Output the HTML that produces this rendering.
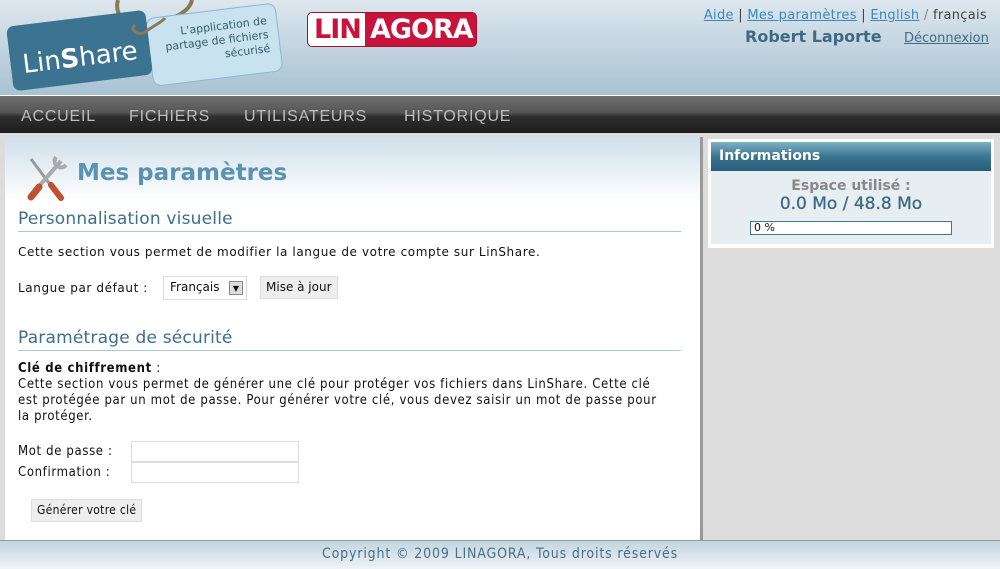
<!DOCTYPE html>
<html><head><meta charset="utf-8">
<style>
*{margin:0;padding:0;box-sizing:border-box}
body{width:1000px;height:569px;overflow:hidden;font-family:"DejaVu Sans","Liberation Sans",sans-serif;font-size:12px;color:#111;background:#dcdcdc;position:relative}
.hdr{position:absolute;left:0;top:0;width:1000px;height:96px;background:linear-gradient(#dde7ee,#a8c2d2);border-bottom:1px solid #fff}
.nav{position:absolute;left:0;top:96px;width:1000px;height:37px;background:linear-gradient(#707070,#555 45%,#2e2e2e 55%,#1e1e1e)}
.nav span{position:absolute;top:12px;color:#bdbdbd;font-family:"Liberation Sans",sans-serif;font-size:16px;letter-spacing:.8px}
.top{position:absolute;right:13px;top:8px;font-size:13px;color:#444;letter-spacing:.3px}
.top a{color:#3a8ab8;text-decoration:underline}
.main{position:absolute;left:5px;top:137px;width:695px;height:403px;background:#fff;box-shadow:3px 0 0 #999}
.tgrad{position:absolute;left:0;top:0;width:695px;height:65px;background:linear-gradient(#cfe0ea,#fff)}
h1{position:absolute;left:72px;top:23px;font-size:23px;color:#5a93b0;font-weight:bold}
h2{position:absolute;left:13px;font-size:17px;font-weight:normal;color:#3e6e8a;width:663px;border-bottom:1px solid #a8c8dc;padding-bottom:2px;letter-spacing:.2px}
.p{position:absolute;left:13px;letter-spacing:.6px}
.cond{font-family:"DejaVu Sans Condensed","DejaVu Sans",sans-serif;font-size:13px;line-height:16px;letter-spacing:.65px}
.btn{position:absolute;background:#eee;border:1px solid #ddd;font-size:12px;padding:0 5px;line-height:21px}
.inp{position:absolute;left:126px;width:168px;height:21px;border:1px solid #ddd;background:#fff}
.side{position:absolute;left:708px;top:139px;width:286px;height:109px;background:#fff}
.foot{position:absolute;left:0;top:540px;width:1000px;height:29px;background:linear-gradient(#c2d5e0,#eef3f6);border-top:1px solid #999;text-align:center;font-size:14px;letter-spacing:.85px;color:#4a6f86;line-height:26px;font-family:"DejaVu Sans Condensed","DejaVu Sans",sans-serif}
</style></head><body>
<div class="hdr">
 <svg width="300" height="96" style="position:absolute;left:0;top:0">
  <path d="M118 0 C115 10,120 20,130 25 M192 0 C190 10,175 20,160 20" stroke="#8a7a55" stroke-width="4" fill="none"/>
  <g transform="rotate(-7 220 50)"><rect x="150" y="10" width="130" height="68" rx="8" fill="#c8e2f0" stroke="#8ab8d0"/>
  <text x="270" y="30" text-anchor="end" font-size="11" fill="#3a5a6a" font-family="DejaVu Sans">L'application de</text>
  <text x="270" y="44" text-anchor="end" font-size="11" fill="#3a5a6a" font-family="DejaVu Sans">partage de fichiers</text>
  <text x="270" y="58" text-anchor="end" font-size="11" fill="#3a5a6a" font-family="DejaVu Sans">sécurisé</text></g>
  <g transform="rotate(-7 80 55)"><rect x="10" y="18" width="140" height="65" rx="7" fill="#3c7391"/>
  <text x="22" y="66" font-size="26" fill="#fff" font-family="DejaVu Sans">Lin<tspan font-weight="bold">S</tspan>hare</text></g>
  <path d="M135 25 C128 30,140 38,148 30 C155 25,162 22,165 18" stroke="#8a7a55" stroke-width="3" fill="none"/>
 </svg>
 <div style="position:absolute;left:307px;top:12px;width:170px;height:35px;border-radius:5px;background:#c8143c;border:1px solid #a01030;overflow:hidden">
  <div style="position:absolute;left:0;top:0;width:57px;height:35px;background:#fff"></div>
  <span style="position:absolute;left:6px;top:1px;font:bold 27px 'DejaVu Sans',sans-serif;color:#c8143c;letter-spacing:-1px">LIN</span>
  <span style="position:absolute;left:62px;top:1px;font:bold 27px 'DejaVu Sans',sans-serif;color:#fff;letter-spacing:-1px">AGORA</span>
 </div>
 <div class="top"><a>Aide</a> | <a>Mes paramètres</a> | <a>English</a> <span style="color:#888">/</span> français</div>
 <div style="position:absolute;left:745px;top:27px;font-size:16px;font-weight:bold;color:#3e6a82">Robert Laporte</div>
 <div style="position:absolute;left:904px;top:31px;font-size:13px;color:#3e6a82;text-decoration:underline">Déconnexion</div>
</div>
<div class="nav"><span style="left:21px">ACCUEIL</span><span style="left:129px">FICHIERS</span><span style="left:244px">UTILISATEURS</span><span style="left:404px">HISTORIQUE</span></div>
<div class="main">
 <div class="tgrad"></div>
 <svg width="44" height="46" style="position:absolute;left:20px;top:18px">
  <path d="M6 4 L30 36" stroke="#999" stroke-width="3"/>
  <path d="M26 30 L36 43" stroke="#c05030" stroke-width="6" stroke-linecap="round"/>
  <path d="M36 6 L8 38" stroke="#aaa" stroke-width="4"/>
  <path d="M31 2 a6 6 0 1 0 10 8" stroke="#aaa" stroke-width="4" fill="none"/>
  <path d="M14 32 L6 42" stroke="#c05030" stroke-width="7" stroke-linecap="round"/>
 </svg>
 <h1>Mes paramètres</h1>
 <h2 style="top:72px">Personnalisation visuelle</h2>
 <div class="p" style="top:108px">Cette section vous permet de modifier la langue de votre compte sur LinShare.</div>
 <div class="p" style="top:144px">Langue par défaut :</div>
 <div style="position:absolute;left:158px;top:139px;width:84px;height:24px;border:1px solid #ddd;background:#fff;font-size:12px;padding:3px 6px">Français
  <div style="position:absolute;right:3px;top:4px;width:14px;height:14px;background:#ddd;border:1px solid #888;font-size:8px;text-align:center;line-height:13px">▼</div></div>
 <div class="btn" style="left:255px;top:139px;height:23px">Mise à jour</div>
 <h2 style="top:191px">Paramétrage de sécurité</h2>
 <div class="p cond" style="top:224px;width:643px"><b>Clé de chiffrement</b> :<br>Cette section vous permet de générer une clé pour protéger vos fichiers dans LinShare. Cette clé est protégée par un mot de passe. Pour générer votre clé, vous devez saisir un mot de passe pour la protéger.</div>
 <div class="p cond" style="top:307px">Mot de passe :</div>
 <div class="p cond" style="top:328px">Confirmation :</div>
 <div class="inp" style="top:304px"></div><div class="inp" style="top:325px"></div>
 <div class="btn cond" style="left:26px;top:362px;height:23px;font-size:12px;letter-spacing:.3px">Générer votre clé</div>
</div>
<div class="side">
 <div style="position:absolute;left:3px;top:3px;width:280px;height:29px;background:linear-gradient(#7fb0c8,#3a7590 50%,#2a5e78);color:#fff;font-weight:bold;font-size:14px;padding:6px 8px">Informations</div>
 <div style="position:absolute;left:3px;top:32px;width:280px;height:73px;background:#e6eef2;text-align:center">
  <div style="margin-top:7px;font-size:14px;font-weight:bold;color:#888">Espace utilisé :</div>
  <div style="font-size:17px;color:#3e6a82;font-weight:500;-webkit-text-stroke:.3px #3e6a82">0.0 Mo / 48.8 Mo</div>
  <div style="position:absolute;left:39px;top:50px;width:202px;height:14px;border:1px solid #3e7a98;background:#fff;text-align:left;font-size:11px;line-height:12px;padding-left:3px">0 %</div>
 </div>
</div>
<div class="foot">Copyright © 2009 LINAGORA, Tous droits réservés</div>
</body></html>
